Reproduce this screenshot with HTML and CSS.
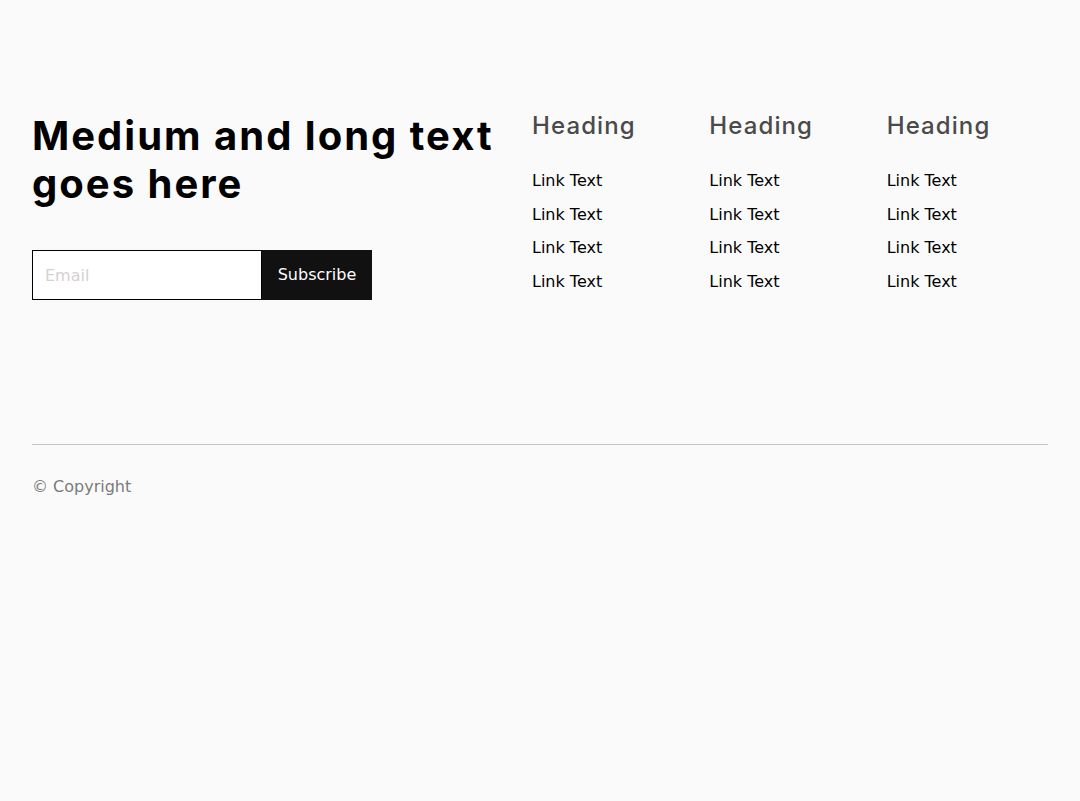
FILE: index.html
```html
<!DOCTYPE html>
<html>
<head>
<meta charset="utf-8">
<link rel="stylesheet" href="styles.css">
</head>
<body>
<footer class="footer">
  <div class="top">
    <div class="intro">
      <h2 class="title">Medium and long text goes here</h2>
      <form class="subscribe">
        <input class="email" type="text" placeholder="Email">
        <button class="btn" type="button">Subscribe</button>
      </form>
    </div>
    <div class="cols">
      <div class="col">
        <h3 class="col-head">Heading</h3>
        <ul class="links">
          <li>Link Text</li><li>Link Text</li><li>Link Text</li><li>Link Text</li>
        </ul>
      </div>
      <div class="col">
        <h3 class="col-head">Heading</h3>
        <ul class="links">
          <li>Link Text</li><li>Link Text</li><li>Link Text</li><li>Link Text</li>
        </ul>
      </div>
      <div class="col">
        <h3 class="col-head">Heading</h3>
        <ul class="links">
          <li>Link Text</li><li>Link Text</li><li>Link Text</li><li>Link Text</li>
        </ul>
      </div>
    </div>
  </div>
  <hr class="rule">
  <p class="copy">© Copyright</p>
</footer>
</body>
</html>
```
FILE: styles.css
```css
html, body {
  margin: 0;
  padding: 0;
  background: #fafafa;
}
body {
  font-family: "DejaVu Sans", sans-serif;
  color: #000;
}
.footer {
  padding: 108px 32px 0;
}
.top {
  display: flex;
  gap: 32px;
  height: 336px;
}
.intro {
  width: 468px;
  flex: none;
}
.title {
  margin: 4px 0 0;
  font-family: Inter, sans-serif;
  font-weight: 700;
  font-size: 40px;
  line-height: 48px;
  letter-spacing: 2px;
}
.subscribe {
  display: flex;
  margin-top: 42px;
}
.email {
  box-sizing: border-box;
  width: 230px;
  height: 50px;
  border: 1px solid #000;
  background: #fff;
  padding: 0 12px;
  font-family: "DejaVu Sans", sans-serif;
  font-size: 16px;
  outline: none;
  margin: 0;
}
.email::placeholder {
  color: #d6d0d0;
}
.btn {
  box-sizing: border-box;
  width: 110px;
  height: 50px;
  border: 0;
  background: #111;
  color: #fff;
  font-family: "DejaVu Sans", sans-serif;
  font-size: 16px;
  margin: 0;
  padding: 0 0 2px;
}
.cols {
  flex: 1;
  display: grid;
  grid-template-columns: repeat(3, 1fr);
  gap: 16px;
}
.col-head {
  margin: 0;
  font-family: Inter, sans-serif;
  font-weight: 500;
  font-size: 24px;
  line-height: 36px;
  letter-spacing: 1.1px;
  color: #4a4a4a;
}
.links {
  list-style: none;
  margin: 25px 0 0;
  padding: 0;
  display: flex;
  flex-direction: column;
  gap: 9.6px;
}
.links li {
  font-size: 16px;
  line-height: 24px;
}
.rule {
  margin: 0;
  border: 0;
  border-top: 1px solid #c4c4c4;
}
.copy {
  margin: 30px 0 0;
  font-size: 16px;
  line-height: 24px;
  color: #7a7a7a;
}
```
